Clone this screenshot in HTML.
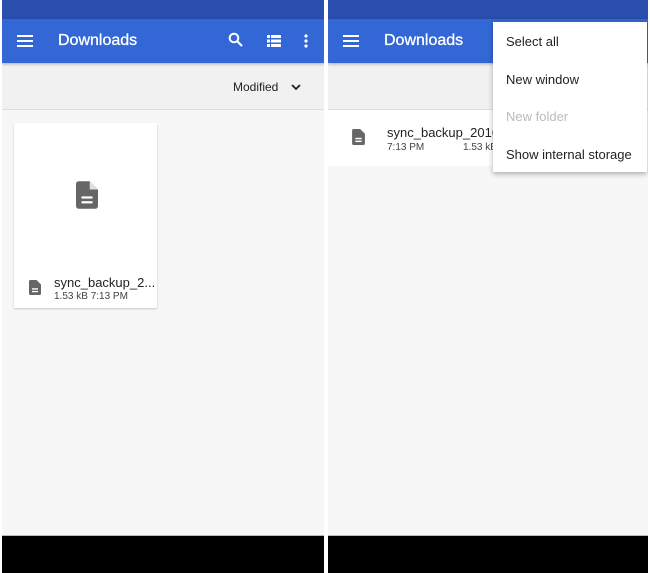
<!DOCTYPE html>
<html><head><style>
body{margin:0;width:650px;height:573px;background:#fff;position:relative;overflow:hidden;font-family:"Liberation Sans",Arial,sans-serif}
.scr{position:absolute;top:0;width:322px;height:573px;background:#f7f7f7;overflow:hidden}
.sb{position:absolute;left:0;top:0;width:100%;height:19px;background:#2a4fae}
.tb{position:absolute;left:0;top:19px;width:100%;height:44px;background:#3367d6;box-shadow:0 1px 3px rgba(0,0,0,.3);z-index:2}
.tb .t{position:absolute;left:56px;top:13px;color:#fff;font-size:16px;-webkit-text-stroke:0.3px #fff}
.sort{position:absolute;left:0;top:63px;width:100%;height:46px;background:#f1f1f1;border-bottom:1px solid #ddd}
.black{position:absolute;left:0;top:535px;width:100%;height:38px;background:#000;border-top:1px solid #bbb}
.ham{position:absolute;left:15px;top:16px;width:16px;height:12px}
.ham i{display:block;height:2px;background:#fff;margin-bottom:3px}
</style></head><body>
<div class="scr" style="left:2px">
 <div class="sb"></div>
 <div class="tb"><div class="ham"><i></i><i></i><i></i></div><div class="t">Downloads</div>
  <svg style="position:absolute;left:226px;top:13px" width="16" height="16" viewBox="0 0 16 16"><circle cx="6" cy="6" r="4.3" stroke="#fff" stroke-width="2" fill="none"/><path d="M9 9l5 5" stroke="#fff" stroke-width="2.2"/></svg>
  <svg style="position:absolute;left:265px;top:16px" width="14" height="12" viewBox="0 0 14 12"><rect x="0" y="0" width="3" height="3" fill="#fff"/><rect x="4" y="0" width="10" height="3" fill="#fff"/><rect x="0" y="4.5" width="3" height="3" fill="#fff"/><rect x="4" y="4.5" width="10" height="3" fill="#fff"/><rect x="0" y="9" width="3" height="3" fill="#fff"/><rect x="4" y="9" width="10" height="3" fill="#fff"/></svg>
  <svg style="position:absolute;left:302px;top:15px" width="4" height="14"><circle cx="2" cy="2" r="1.6" fill="#fff"/><circle cx="2" cy="7" r="1.6" fill="#fff"/><circle cx="2" cy="12" r="1.6" fill="#fff"/></svg>
 </div>
 <div class="sort"><span style="position:absolute;left:231px;top:17px;font-size:12px;color:#222">Modified</span>
  <svg style="position:absolute;left:289px;top:21px" width="10" height="7"><path d="M1 1l4 4 4-4" stroke="#222" stroke-width="1.8" fill="none"/></svg></div>
 <div style="position:absolute;left:12px;top:123px;width:143px;height:185px;background:#fff;box-shadow:0 1px 2px rgba(0,0,0,.2)">
  <svg style="position:absolute;left:62px;top:58px" width="22" height="28" viewBox="0 0 16 20"><path d="M2 0h8l6 6v12a2 2 0 0 1-2 2H2a2 2 0 0 1-2-2V2a2 2 0 0 1 2-2z" fill="#666"/><path d="M10 0v6h6z" fill="#fff" opacity=".8"/><rect x="4" y="11" width="8" height="1.6" fill="#fff"/><rect x="4" y="14.5" width="8" height="1.6" fill="#fff"/></svg>
  <svg style="position:absolute;left:15px;top:157px" width="12" height="15" viewBox="0 0 16 20"><path d="M2 0h8l6 6v12a2 2 0 0 1-2 2H2a2 2 0 0 1-2-2V2a2 2 0 0 1 2-2z" fill="#666"/><rect x="4" y="11" width="8" height="1.8" fill="#fff"/><rect x="4" y="14.5" width="8" height="1.8" fill="#fff"/></svg>
  <div style="position:absolute;left:40px;top:152px;font-size:13px;color:#222">sync_backup_2...</div>
  <div style="position:absolute;left:40px;top:168px;font-size:10px;color:#444">1.53 kB 7:13 PM</div>
 </div>
 <div class="black"></div>
</div>
<div class="scr" style="left:328px;width:320px">
 <div class="sb"></div>
 <div class="tb"><div class="ham"><i></i><i></i><i></i></div><div class="t">Downloads</div></div>
 <div class="sort"></div>
 <div style="position:absolute;left:0;top:110px;width:100%;height:56px;background:#fff">
  <svg style="position:absolute;left:24px;top:19px" width="13" height="16" viewBox="0 0 16 20"><path d="M2 0h8l6 6v12a2 2 0 0 1-2 2H2a2 2 0 0 1-2-2V2a2 2 0 0 1 2-2z" fill="#666"/><rect x="4" y="11" width="8" height="1.8" fill="#fff"/><rect x="4" y="14.5" width="8" height="1.8" fill="#fff"/></svg>
  <div style="position:absolute;left:59px;top:15px;font-size:13px;color:#222">sync_backup_2016</div>
  <div style="position:absolute;left:59px;top:32px;font-size:10px;color:#444">7:13 PM</div>
  <div style="position:absolute;left:135px;top:32px;font-size:10px;color:#444">1.53 kB</div>
 </div>
 <div class="black"></div>
 <div style="position:absolute;left:165px;top:22px;width:154px;height:150px;background:#fff;box-shadow:0 2px 5px rgba(0,0,0,.3);z-index:5;font-size:13px;color:#222">
  <div style="position:absolute;left:13px;top:12px">Select all</div>
  <div style="position:absolute;left:13px;top:50px">New window</div>
  <div style="position:absolute;left:13px;top:87px;color:#bbb">New folder</div>
  <div style="position:absolute;left:13px;top:125px">Show internal storage</div>
 </div>
</div>
</body></html>
